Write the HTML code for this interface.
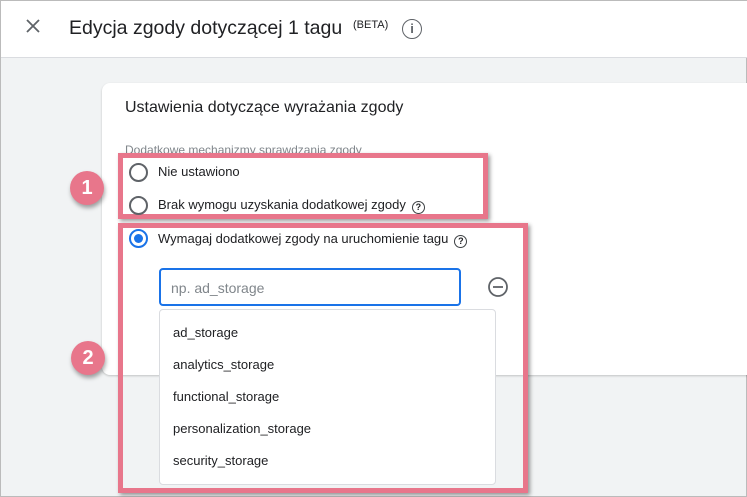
<!DOCTYPE html>
<html><head><meta charset="utf-8"><style>
*{box-sizing:border-box;margin:0;padding:0}
body{width:747px;height:497px;overflow:hidden;font-family:"Liberation Sans",Roboto,sans-serif;background:#f1f3f4;position:relative;border:1px solid #bbb}
.abs{position:absolute}
.hdr{left:0;top:0;width:747px;height:57px;background:#fff;border-bottom:1px solid #dadce0}
.card{left:101px;top:82px;width:660px;height:292px;background:#fff;border-radius:8px;box-shadow:0 1px 2px rgba(0,0,0,.2)}
.radio{width:19px;height:19px;border:2px solid #5f6368;border-radius:50%}
.t{font-size:13px;color:#202124;white-space:nowrap}
.pink{border:5px solid #e8768b;box-shadow:2px 2px 4px rgba(0,0,0,.4)}
.badge{width:34px;height:34px;border-radius:50%;background:#e8768b;color:#fff;font-size:20px;font-weight:bold;text-align:center;line-height:34px;box-shadow:1px 3px 4px rgba(0,0,0,.35)}
.q{display:inline-block;width:13px;height:13px;border:1.5px solid #3c4043;border-radius:50%;font-size:9px;text-align:center;line-height:10px;font-weight:bold;vertical-align:-1px;margin-left:6px}
.item{position:absolute;left:13px;font-size:13px;color:#202124}
</style></head><body>
<div class="abs hdr"></div>
<svg class="abs" style="left:24px;top:17px" width="16" height="16"><path d="M2 2L14 14M14 2L2 14" stroke="#5f6368" stroke-width="1.8"/></svg>
<div class="abs" style="left:68px;top:16px;font-size:19.5px;color:#202124;white-space:nowrap">Edycja zgody dotyczącej 1 tagu</div>
<div class="abs" style="left:352px;top:18px;font-size:11px;color:#202124">(BETA)</div>
<div class="abs" style="left:401px;top:18px;width:20px;height:20px;border:1.8px solid #5f6368;border-radius:50%;color:#5f6368;font-size:13px;text-align:center;line-height:17px;font-weight:bold">i</div>
<div class="abs card"></div>
<div class="abs" style="left:124px;top:98px;font-size:16px;color:#202124">Ustawienia dotyczące wyrażania zgody</div>
<div class="abs" style="left:124px;top:142px;font-size:12px;color:#80868b">Dodatkowe mechanizmy sprawdzania zgody</div>
<div class="abs pink" style="left:117px;top:152px;width:370px;height:66px;background:#fff"></div>
<div class="abs pink" style="left:117px;top:222px;width:410px;height:270px"></div>
<div class="abs radio" style="left:128px;top:162px"></div>
<div class="abs t" style="left:157px;top:163px">Nie ustawiono</div>
<div class="abs radio" style="left:128px;top:195px"></div>
<div class="abs t" style="left:157px;top:196px">Brak wymogu uzyskania dodatkowej zgody<span class="q">?</span></div>
<div class="abs radio" style="left:128px;top:228px;border-color:#1a73e8"><div style="width:9px;height:9px;border-radius:50%;background:#1a73e8;margin:3px"></div></div>
<div class="abs t" style="left:157px;top:230px">Wymagaj dodatkowej zgody na uruchomienie tagu<span class="q">?</span></div>
<div class="abs" style="left:158px;top:267px;width:302px;height:38px;border:2px solid #1a73e8;border-radius:4px;background:#fff"></div>
<div class="abs" style="left:170px;top:279px;font-size:14px;color:#80868b">np. ad_storage</div>
<svg class="abs" style="left:486px;top:275px" width="22" height="22"><circle cx="11" cy="11" r="9" fill="none" stroke="#5f6368" stroke-width="1.8"/><path d="M6 11H16" stroke="#5f6368" stroke-width="1.8"/></svg>
<div class="abs" style="left:158px;top:308px;width:337px;height:176px;background:#fff;border:1px solid #dadce0;border-radius:4px">
<div class="item" style="top:15px">ad_storage</div>
<div class="item" style="top:47px">analytics_storage</div>
<div class="item" style="top:79px">functional_storage</div>
<div class="item" style="top:111px">personalization_storage</div>
<div class="item" style="top:143px">security_storage</div>
</div>
<div class="abs badge" style="left:69px;top:170px">1</div>
<div class="abs badge" style="left:70px;top:340px">2</div>
</body></html>
